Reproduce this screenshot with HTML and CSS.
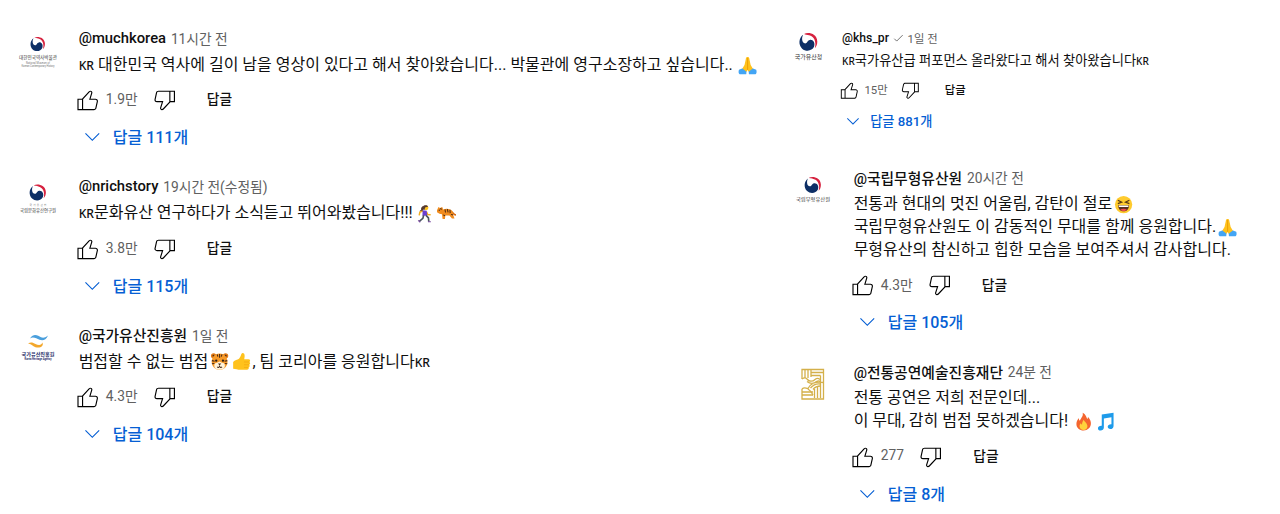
FILE: index.html
```html
<!DOCTYPE html>
<html lang="ko">
  <head>
    <meta charset="UTF-8" />
    <meta name="viewport" content="width=device-width, initial-scale=1.0" />
    <title>댓글</title>
    <link rel="stylesheet" href="styles.css">
  </head>
  <body>
    <!-- Shared icons -->
    <svg class="sprite" width="0" height="0">
      <symbol id="like" viewBox="0 -1 24 24">
        <path d="M18.77,11h-4.23l1.52-4.94C16.38,5.03,15.54,4,14.38,4c-0.58,0-1.14,0.24-1.52,0.65L7,11H3v10h4h1h9.43c1.06,0,1.98-0.67,2.19-1.61l1.34-6C21.23,12.15,20.18,11,18.77,11z M7,20H4v-8h3V20z M19.98,13.17l-1.34,6C18.54,19.65,18.03,20,17.43,20H8v-8.61l5.6-6.06C13.79,5.12,14.08,5,14.38,5c0.26,0,0.5,0.11,0.63,0.3c0.07,0.1,0.15,0.26,0.09,0.47l-1.52,4.94L13.18,12h1.35h4.23c0.41,0,0.8,0.17,1.03,0.46C19.92,12.61,20.05,12.86,19.98,13.17z" />
      </symbol>
      <symbol id="dislike" viewBox="0 0 24 24">
        <use href="#like" width="24" height="24" transform="rotate(180 12 13.5)" />
      </symbol>
      <symbol id="chevron" viewBox="0 -1 24 24">
        <path d="M18 9.28l-6.35 6.35-6.37-6.35.72-.71 5.64 5.65 5.65-5.65z" />
      </symbol>
      <symbol id="taegeuk" viewBox="0 0 20 20">
        <path d="M5 2.8C.5 6 0 13 4 16.8C7.5 20 14 19.5 16 15C17.5 11 15 7.5 11.8 8C9 8.5 9.3 11.5 7 11.5C4 11.3 3 6.5 5 2.8z" fill="#0d2f66" />
        <path d="M6 2C10-.2 19 1.5 19.3 9.5C19.4 12.5 18.3 15 16.8 16.3C18.3 11 17 4.5 11 3.2C9 2.8 7.3 2.7 6 2z" fill="#d6223f" />
      </symbol>
      <symbol id="pray" viewBox="0 0 20 20">
        <path d="M1 14.4l4-1.7 4 2.1-.4 4.2H1.7C.5 18.6.3 16 1 14.4zM19 14.4l-4-1.7-4 2.1.4 4.2h6.9c1.2-.4 1.4-3 .7-4.6z" fill="#42a5f5" />
        <path d="M9.500 1c-1 0-1.200 1-1.400 2.300L6.800 9.400 4.600 13l4.300 3.300L10 14.500l1.100 1.800 4.300-3.300-2.200-3.600-1.300-6.100C11.700 2 11.500 1 10.500 1z" fill="#ffc21c" />
        <path d="M10 2v12.500" stroke="#e59600" stroke-width=".8" />
      </symbol>
      <symbol id="runner" viewBox="0 0 20 20">
        <path d="M9.500 2C7 2 6 4 6.400 6L4.500 7.500 8 8z" fill="#543930" />
        <circle cx="11.500" cy="4" r="2.500" fill="#ffc21c" />
        <path d="M9 1.700c2-1 4.500-.5 4.700 1l-3.200 1-.6 2.500-2.200-.8z" fill="#543930" />
        <path d="M8.200 7.200L5 8.600l-.6 3.200M12 8l1.300 3 3 .3" fill="none" stroke="#f2ae20" stroke-width="1.500" />
        <path d="M8 6.600l4.200.4.6 5.300H7.700z" fill="#6a3fd0" />
        <path d="M9 11.700L8.200 15l-3.700 3.200M11.500 11.800l2.500 2.600.4 4" fill="none" stroke="#4a5560" stroke-width="1.700" />
        <path d="M3.300 17l2.200 2M13.500 18.500h3" stroke="#7b4ba0" stroke-width="1.200" />
      </symbol>
      <symbol id="tiger" viewBox="1 2 18.500 18.500">
        <path d="M14.500 9.500c3 .5 2.500 4 5 2.800" fill="none" stroke="#d76c15" stroke-width="1.500" />
        <path d="M1 8l1.400-3 1.500.8L6 5l1 2.300c3-1.300 7.500-.7 9 1.800l.7 3.500 1.200 3.400h-2.500L13 13l-4 .2-.3 3.300H6.400L5.800 12l-2.400-.7L1 10z" fill="#f28c1e" />
        <path d="M8.700 7.200l.5 3M11 7l.7 3M13.500 7.500l.2 3.300M7 12.500l1.800.8M14.500 12l2 .7M4.500 5.800l.7 1.800" stroke="#4a2b16" stroke-width="1" />
        <circle cx="3.200" cy="8" r=".6" fill="#222" />
      </symbol>
      <symbol id="tiger-face" viewBox="0 0 20 20">
        <circle cx="3.800" cy="4" r="2.800" fill="#e27a16" />
        <circle cx="16.200" cy="4" r="2.800" fill="#e27a16" />
        <circle cx="3.800" cy="4" r="1.200" fill="#4a2b16" />
        <circle cx="16.200" cy="4" r="1.200" fill="#4a2b16" />
        <path d="M10 1.500c5.500 0 8 4 8.200 8.500.2 5-3.600 8.700-8.200 8.700S1.600 15 1.800 10C2 5.500 4.500 1.500 10 1.500z" fill="#f79a28" />
        <path d="M4.500 14c0-3 3-2 5.500-4 2.500 2 5.500 1 5.500 4 0 3-2.500 4.500-5.500 4.500S4.500 17 4.500 14z" fill="#fff3d9" />
        <path d="M10 2v4M7.500 2.500l.7 2.300M12.500 2.500l-.7 2.300M2 9l2.800.7M2 12.200l2.500-.2M18 9l-2.800.7M18 12.200l-2.500-.2M7.500 15.500c1 1 2 .6 2.500-.5.5 1.100 1.500 1.500 2.500.5" fill="none" stroke="#45291a" stroke-width="1.100" />
        <circle cx="6.500" cy="9" r="1.200" fill="#2b1c14" />
        <circle cx="13.500" cy="9" r="1.200" fill="#2b1c14" />
        <path d="M8.300 12h3.400L10 14z" fill="#45291a" />
      </symbol>
      <symbol id="thumb" viewBox="0 0 20 20">
        <path d="M1.200 10.500C3 8 5.500 8.500 7.300 7 9.500 5 9.300 1.300 11 1.100c2.600-.1 2.500 3.700 1.700 6.400h4.500c2 0 2.200 2.300.9 2.900 1.300.7 1 2.500-.2 2.900 1 .9.500 2.400-.6 2.700.6 1.200-.2 2.600-1.800 2.600H9C5.500 18.600 4 17.500 1.200 17.400z" fill="#ffc21c" />
        <path d="M12.500 10.400H18M12.500 13.300h5.200M12.500 16h4.500" stroke="#f0a50c" stroke-width=".7" />
      </symbol>
      <symbol id="laugh" viewBox="0 0 20 20">
        <circle cx="10" cy="10" r="9" fill="#ffcb2e" />
        <path d="M4 5.500L8 7.500 4 9M16 5.500L12 7.500 16 9" fill="none" stroke="#5a3b17" stroke-width="1.300" />
        <path d="M4.300 10.700h11.400c0 4-2.500 6.300-5.700 6.300s-5.700-2.300-5.700-6.300z" fill="#5a3020" />
        <path d="M5 11h10v1.600H5z" fill="#fff" />
        <path d="M6.500 15.500c2-1.600 5-1.600 7 0-1.800 1.900-5.200 1.900-7 0z" fill="#ef4b4b" />
      </symbol>
      <symbol id="fire" viewBox="0 0 20 20">
        <path d="M9 .8c4 2.200 3.500 4.600 5 6.500.5-.6.6-1.500.5-2.300 2.500 2.700 3.300 5 3.100 7.600-.3 4-3.400 6.600-7.600 6.600s-7.500-2.700-7.500-6.800c0-3 1.500-4.600 2.400-6.200.2 1.400.5 2.200 1.300 2.800C7 6.500 10 4.500 9 .8z" fill="#f4652f" />
        <path d="M10.300 8c.2 2 3.700 3.500 3.700 6.800 0 2.500-1.700 4-4 4s-4.200-1.500-4.200-4c0-1.500.6-2.400 1.400-3.200.3 1 .7 1.300 1.200 1.500C8.300 11 9 9.500 10.300 8z" fill="#ffd23c" />
      </symbol>
      <symbol id="note" viewBox="0 0 20 20">
        <path d="M6 2.700L18.300.8v13.700c0 2-1.500 3.300-3.300 3.300s-2.800-1-2.800-2.300c0-1.700 1.800-2.900 3.900-2.700V5.500L8.200 6.800v9.400c0 2-1.600 3.200-3.400 3.200S2 18.400 2 17.100c0-1.700 1.800-2.900 4-2.700z" fill="#1e9bea" />
      </symbol>
    </svg>

    <main class="board">
      <section class="column">
        <article class="comment">
          <svg class="avatar" viewBox="0 0 40 40">
            <use href="#taegeuk" x="11.500" y="5" width="16" height="16" />
            <text class="org" x="20" y="28" textLength="38" lengthAdjust="spacingAndGlyphs">대한민국역사박물관</text>
            <text class="org-en" x="20" y="32.500" textLength="24">National Museum of</text>
            <text class="org-en" x="20" y="35.500" textLength="33">Korean Contemporary History</text>
          </svg>
          <div class="content">
            <div class="head"><span class="name">@muchkorea</span><span class="time">11시간 전</span></div>
            <p class="text"><span class="flag">KR</span> 대한민국 역사에 길이 남을 영상이 있다고 해서 찾아왔습니다... 박물관에 영구소장하고 싶습니다.. <svg class="emoji"><use href="#pray" /></svg></p>
            <div class="actions">
              <svg class="icon"><use href="#like" /></svg>
              <span class="count">1.9만</span>
              <svg class="icon"><use href="#dislike" /></svg>
              <span class="reply">답글</span>
            </div>
            <div class="replies"><svg class="icon"><use href="#chevron" /></svg><span>답글 111개</span></div>
          </div>
        </article>

        <article class="comment">
          <svg class="avatar" viewBox="0 0 40 40">
            <use href="#taegeuk" x="10.500" y="4.500" width="18" height="18" />
            <text class="org-en" x="20" y="27" textLength="17">국가유산청</text>
            <text class="org" x="20" y="32.500" textLength="36" lengthAdjust="spacingAndGlyphs">국립문화유산연구원</text>
          </svg>
          <div class="content">
            <div class="head"><span class="name">@nrichstory</span><span class="time">19시간 전(수정됨)</span></div>
            <p class="text"><span class="flag">KR</span>문화유산 연구하다가 소식듣고 뛰어와봤습니다!!! <svg class="emoji emoji-tight"><use href="#runner" /></svg><svg class="emoji"><use href="#tiger" /></svg></p>
            <div class="actions">
              <svg class="icon"><use href="#like" /></svg>
              <span class="count">3.8만</span>
              <svg class="icon"><use href="#dislike" /></svg>
              <span class="reply">답글</span>
            </div>
            <div class="replies"><svg class="icon"><use href="#chevron" /></svg><span>답글 115개</span></div>
          </div>
        </article>

        <article class="comment">
          <svg class="avatar" viewBox="0 0 40 40">
            <path d="M12 10.500c4-6 8-2.500 11-1.300 2 .8 4 .6 7-1.700-2 4.500-5 5.500-8.500 4.300-3-1-6-3.500-9.500-1.300z" fill="#4a9fdc" />
            <path d="M10 15.500c3-1.800 5-.8 7.500.5 3 1.500 6.500 1.300 6.700-1.500 2.300 3.500-2.200 6.200-6.700 4.700-3-1-4.500-3.500-7.500-3.700z" fill="#f3a72b" />
            <text class="org org-blue" x="20" y="27.500" textLength="33" lengthAdjust="spacingAndGlyphs">국가유산진흥원</text>
            <text class="org-en org-blue" x="20" y="31.500" textLength="27">Korea Heritage Agency</text>
          </svg>
          <div class="content">
            <div class="head"><span class="name">@국가유산진흥원</span><span class="time">1일 전</span></div>
            <p class="text">범접할 수 없는 범접<svg class="emoji"><use href="#tiger-face" /></svg><svg class="emoji"><use href="#thumb" /></svg>, 팀 코리아를 응원합니다<span class="flag">KR</span></p>
            <div class="actions">
              <svg class="icon"><use href="#like" /></svg>
              <span class="count">4.3만</span>
              <svg class="icon"><use href="#dislike" /></svg>
              <span class="reply">답글</span>
            </div>
            <div class="replies"><svg class="icon"><use href="#chevron" /></svg><span>답글 104개</span></div>
          </div>
        </article>
      </section>

      <section class="column">
        <article class="comment comment-small">
          <svg class="avatar" viewBox="0 0 40 40">
            <use href="#taegeuk" x="7.500" y="0" width="24" height="24" />
            <text class="org org-big" x="20" y="33" textLength="33" lengthAdjust="spacingAndGlyphs">국가유산청</text>
          </svg>
          <div class="content">
            <div class="head">
              <span class="name">@khs_pr</span>
              <svg class="check" viewBox="0 0 12 12"><path d="M1.500 6.500l2.700 2.700L11 2.400" /></svg>
              <span class="time">1일 전</span>
            </div>
            <p class="text"><span class="flag">KR</span>국가유산급 퍼포먼스 올라왔다고 해서 찾아왔습니다<span class="flag">KR</span></p>
            <div class="actions">
              <svg class="icon"><use href="#like" /></svg>
              <span class="count">15만</span>
              <svg class="icon"><use href="#dislike" /></svg>
              <span class="reply">답글</span>
            </div>
            <div class="replies"><svg class="icon"><use href="#chevron" /></svg><span>답글 881개</span></div>
          </div>
        </article>

        <article class="comment">
          <svg class="avatar" viewBox="0 0 40 40">
            <use href="#taegeuk" x="10.500" y="6" width="18" height="18" />
            <text class="org" x="20" y="30.500" textLength="34" lengthAdjust="spacingAndGlyphs">국립무형유산원</text>
          </svg>
          <div class="content">
            <div class="head"><span class="name">@국립무형유산원</span><span class="time">20시간 전</span></div>
            <p class="text">전통과 현대의 멋진 어울림, 감탄이 절로<svg class="emoji"><use href="#laugh" /></svg><br>국립무형유산원도 이 감동적인 무대를 함께 응원합니다.<svg class="emoji"><use href="#pray" /></svg><br>무형유산의 참신하고 힙한 모습을 보여주셔서 감사합니다.</p>
            <div class="actions">
              <svg class="icon"><use href="#like" /></svg>
              <span class="count">4.3만</span>
              <svg class="icon"><use href="#dislike" /></svg>
              <span class="reply">답글</span>
            </div>
            <div class="replies"><svg class="icon"><use href="#chevron" /></svg><span>답글 105개</span></div>
          </div>
        </article>

        <article class="comment">
          <svg class="avatar" viewBox="0 0 40 40">
            <g fill="none" stroke="#d4b04a" stroke-width="1.300">
              <path d="M9 15V5.500h21.500V35H9V25M12 6v8M15 6v8M18 6v7M18 8.500h12M18 11.500h9.500M27.500 11.500V34M24.500 23v11M21.500 25v9M9 28h11M9 31h11" />
              <path d="M9 15c2-1.500 4-1.500 5.500.5s5 2.500 7.500 0c1.500-1.300 3.500-1.300 5 0M14 17.500c3 2.500 7 2.500 9.500 0 1.500-1 2.500-1 4 0M9 25c2-2 4-1 6-.5 3-6 9-7 15.500-6M15 25c3 2 4 3 5 6M17.500 24c3-3.500 7-4.500 10-4M20 25.500c2-2.500 5-3.500 7.500-3.500" />
            </g>
          </svg>
          <div class="content">
            <div class="head"><span class="name">@전통공연예술진흥재단</span><span class="time">24분 전</span></div>
            <p class="text">전통 공연은 저희 전문인데...<br>이 무대, 감히 범접 못하겠습니다! <svg class="emoji"><use href="#fire" /></svg><svg class="emoji"><use href="#note" /></svg></p>
            <div class="actions">
              <svg class="icon"><use href="#like" /></svg>
              <span class="count">277</span>
              <svg class="icon"><use href="#dislike" /></svg>
              <span class="reply">답글</span>
            </div>
            <div class="replies"><svg class="icon"><use href="#chevron" /></svg><span>답글 8개</span></div>
          </div>
        </article>
      </section>
    </main>
  </body>
</html>
```

FILE: styles.css
```css
* {
  margin: 0;
  padding: 0;
  box-sizing: border-box;
}

body {
  background-color: #fff;
  color: #0f0f0f;
  font-family: Roboto, "Noto Sans CJK KR", sans-serif;
}

.sprite {
  display: block;
}

.board {
  display: grid;
  grid-template-columns: 775px 1fr;
  height: 514px;
}

.column {
  display: flex;
  flex-direction: column;
  gap: 29.3px;
  padding: 27px 0 0 18px;
}

/* everything inside a comment is sized in em */
.comment {
  display: flex;
  gap: 1.29em;
  font-size: 16px;
}

.comment-small {
  font-size: 13.2px;
  padding-top: 2px;
  margin-left: -1px;
  margin-bottom: 8.5px;
}

.avatar {
  flex: none;
  width: 2.5em;
  height: 2.5em;
  margin-top: 0.25em;
  overflow: visible;
}

.org {
  font-size: 5px;
  text-anchor: middle;
  fill: #333;
}

.org-big {
  font-size: 7px;
}

.org-en {
  font-size: 2.6px;
  text-anchor: middle;
  fill: #777;
}

.org-blue {
  fill: #252c68;
  font-weight: 700;
}

.head {
  display: flex;
  align-items: center;
  height: 1.375em;
  white-space: nowrap;
}

.name {
  font-size: 0.925em;
  font-weight: 500;
}

.time {
  margin-left: 0.35em;
  font-size: 0.86em;
  color: #606060;
}

.check {
  width: 0.8em;
  height: 0.8em;
  margin-left: 0.3em;
  fill: none;
  stroke: #606060;
}

.text {
  margin-top: 0.25em;
  line-height: 1.4375em;
  white-space: nowrap;
}

.comment-small .text {
  margin-top: 0.32em;
  font-size: 1.005em;
}

.flag {
  font-family: "Noto Sans", sans-serif;
  font-size: 0.76em;
  font-weight: 500;
  line-height: 1;
}

/* negative block margins keep the emoji from stretching its line */
.emoji {
  width: 1.2em;
  height: 1.2em;
  margin: -0.15em 0.09em;
  vertical-align: -0.15em;
}

.emoji-tight {
  margin-left: -0.1em;
}

.actions {
  display: flex;
  align-items: center;
  height: 1.75em;
  margin-top: 0.5625em;
  margin-left: -0.27em;
}

.icon {
  flex: none;
  width: 1.714em;
  height: 1.714em;
}

.count {
  margin: 0 0.97em 0 0.3em;
  padding-bottom: 0.08em;
  font-size: 0.86em;
  color: #606060;
}

.reply {
  margin-left: 2.07em;
  padding-bottom: 0.08em;
  font-size: 0.86em;
  font-weight: 500;
}

.replies {
  display: flex;
  align-items: center;
  gap: 0.42em;
  height: 1.25em;
  margin-top: 0.82em;
  color: #065fd4;
  font-weight: 500;
}

.replies .icon {
  fill: #065fd4;
}
```
